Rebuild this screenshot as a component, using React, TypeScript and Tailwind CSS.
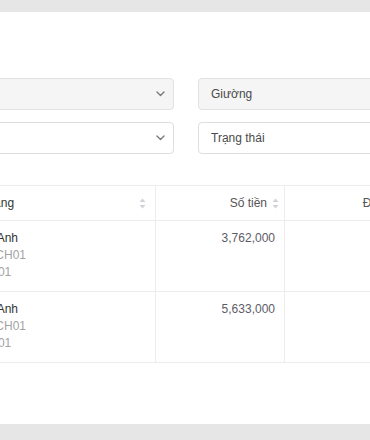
const rows = [
  { name: 'Trần Thị Anh', room: 'Căn hộ: CH01', bed: 'Giường: 01', amount: '3,762,000' },
  { name: 'Trần Thị Anh', room: 'Căn hộ: CH01', bed: 'Giường: 01', amount: '5,633,000' },
]

function SortIcon() {
  return (
    <svg width="7" height="11" viewBox="0 0 7 11" className="shrink-0">
      <path d="M3.5 0.5 L6.5 4 L0.5 4 Z" fill="#d2d2d8" />
      <path d="M3.5 10.5 L6.5 7 L0.5 7 Z" fill="#d2d2d8" />
    </svg>
  )
}

function Chevron() {
  return (
    <svg width="9" height="6" viewBox="0 0 9 6" className="shrink-0">
      <path d="M1 1 L4.5 4.5 L8 1" fill="none" stroke="#7a7a7a" strokeWidth="1.4" strokeLinecap="round" strokeLinejoin="round" />
    </svg>
  )
}

export default function App() {
  return (
    <div
      className="w-[370px] h-[440px] overflow-hidden bg-[#e6e6e6] pt-3"
      style={{ fontFamily: '"Liberation Sans", Arial, sans-serif' }}
    >
      <div className="h-[412px] bg-white pt-[66px] overflow-hidden">
        {/* Filters */}
        <div className="flex flex-col gap-3 -ml-[200px] w-[800px]">
          <div className="flex gap-6">
            <div className="w-[374px] h-8 flex items-center justify-end pr-[8px] bg-[#f5f5f5] border border-[#e2e2e2] rounded-[4px]">
              <Chevron />
            </div>
            <div className="w-[374px] h-8 flex items-center pl-3 bg-[#f5f5f5] border border-[#e2e2e2] rounded-[4px] text-[12px] text-[#4a4a4a]">
              Giường
            </div>
          </div>
          <div className="flex gap-6">
            <div className="w-[374px] h-8 flex items-center justify-end pr-[8px] bg-white border border-[#dedede] rounded-[4px]">
              <Chevron />
            </div>
            <div className="w-[374px] h-8 flex items-center pl-3 bg-white border border-[#dedede] rounded-[4px] text-[12px] text-[#4a4a4a]">
              Trạng thái
            </div>
          </div>
        </div>

        {/* Table */}
        <div className="mt-[31px] -ml-[66px] w-[600px] text-[12px]">
          <div className="flex h-[36px] border-y border-[#ececf0]">
            <div className="w-[222px] flex items-center justify-between pl-4 pr-[9px] border-r border-[#ececf0] text-[#333]">
              <span>Khách hàng</span>
              <SortIcon />
            </div>
            <div className="w-[129px] flex items-center justify-end gap-[5px] pr-[5px] border-r border-[#ececf0] text-[#555]">
              <span>Số tiền</span>
              <SortIcon />
            </div>
            <div className="w-[231px] flex items-center justify-center text-[#555]">Đã thanh toán</div>
          </div>
          {rows.map((r, i) => (
            <div key={i} className="flex h-[71px] border-b border-[#ececf0]">
              <div className="w-[222px] pl-4 pt-[9px] border-r border-[#ececf0] leading-[17px]">
                <div className="text-[#333]">{r.name}</div>
                <div className="text-[#a3a3a3]">{r.room}</div>
                <div className="text-[#a3a3a3]">{r.bed}</div>
              </div>
              <div className="w-[129px] pt-[9px] pr-[9px] text-right leading-[17px] border-r border-[#ececf0] text-[#5c5c66]">
                {r.amount}
              </div>
              <div className="w-[231px]" />
            </div>
          ))}
        </div>
      </div>
    </div>
  )
}
